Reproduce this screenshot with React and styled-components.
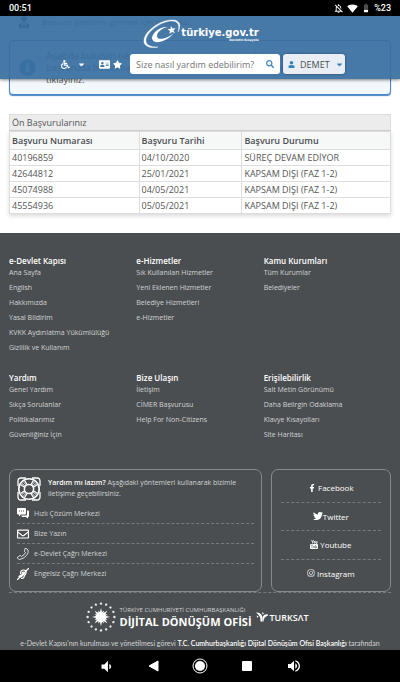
import { useState } from "react";
import styled, { createGlobalStyle, css } from "styled-components";
import {
  FaAddressCard,
  FaCaretDown,
  FaFacebookF,
  FaInfoCircle,
  FaInstagram,
  FaRegEnvelope,
  FaSearch,
  FaStar,
  FaTwitter,
  FaUser,
  FaUserTie,
  FaWheelchair,
} from "react-icons/fa";
import {
  MdBattery20,
  MdOutlineNotificationsOff,
  MdSignalWifi4Bar,
  MdVolumeDown,
  MdVolumeUp,
} from "react-icons/md";

const applications = [
  { id: "40196859", date: "04/10/2020", status: "SÜREÇ DEVAM EDİYOR" },
  { id: "42644812", date: "25/01/2021", status: "KAPSAM DIŞI (FAZ 1-2)" },
  { id: "45074988", date: "04/05/2021", status: "KAPSAM DIŞI (FAZ 1-2)" },
  { id: "45554936", date: "05/05/2021", status: "KAPSAM DIŞI (FAZ 1-2)" },
];

const linkGroups = [
  {
    title: "e-Devlet Kapısı",
    links: [
      "Ana Sayfa",
      "English",
      "Hakkımızda",
      "Yasal Bildirim",
      "KVKK Aydınlatma Yükümlülüğü",
      "Gizlilik ve Kullanım",
    ],
  },
  {
    title: "e-Hizmetler",
    links: [
      "Sık Kullanılan Hizmetler",
      "Yeni Eklenen Hizmetler",
      "Belediye Hizmetleri",
      "e-Hizmetler",
    ],
  },
  { title: "Kamu Kurumları", links: ["Tüm Kurumlar", "Belediyeler"] },
  {
    title: "Yardım",
    links: [
      "Genel Yardım",
      "Sıkça Sorulanlar",
      "Politikalarımız",
      "Güvenliğiniz İçin",
    ],
  },
  {
    title: "Bize Ulaşın",
    links: ["İletişim", "CİMER Başvurusu", "Help For Non-Citizens"],
  },
  {
    title: "Erişilebilirlik",
    links: [
      "Salt Metin Görünümü",
      "Daha Belirgin Odaklama",
      "Klavye Kısayolları",
      "Site Haritası",
    ],
  },
];

const SwooshLogo = () => (
  <svg width="38" height="30" viewBox="0 0 38 30" aria-hidden="true">
    <path
      d="M35 13C39 5 36 1 29 1C17 1 2 12 1 21C0 27 7 30 15 28C7 28 2 26 3 20C5 12 18 2 29 2C35 2 37 6 35 13Z"
      fill="#fff"
      stroke="#fff"
      strokeWidth="0.400"
    />
    <path
      d="M25 8C17 7 9 14 9 19C9 26 23 24 31 14C24 20 14 22 14 17C14 13 19 9 25 8Z"
      fill="#fff"
    />
    <path
      d="M28 7L29.500 9.500L32.500 9L30.500 11.500L32 14L29 13L26.500 15L27 12L24.500 10L27.500 10Z"
      fill="#fff"
    />
  </svg>
);

const LifeRing = () => (
  <svg
    width="24"
    height="24"
    viewBox="0 0 24 24"
    fill="none"
    stroke="#fff"
    aria-hidden="true"
  >
    <circle cx="12" cy="12" r="10.200" strokeWidth="1.600" />
    <circle cx="12" cy="12" r="4.600" strokeWidth="1.500" />
    {[0, 90, 180, 270].map((angle) => (
      <g key={angle} transform={`rotate(${angle} 12 12)`}>
        <path d="M3.500 7.500L8 10.500M7.500 3.500L10.500 8" strokeWidth="1.300" />
        <path d="M5 6.500L8.500 9.500M6.500 5L9.500 8.500" strokeWidth="0.800" />
        <path d="M1 9V4Q1 1 4 1H9" strokeWidth="1.300" />
      </g>
    ))}
  </svg>
);

const ChatIcon = () => (
  <svg width="12" height="12" viewBox="0 0 24 24" aria-hidden="true">
    <path
      d="M2 2H16Q18 2 18 4V13Q18 15 16 15H8L4 19V15H2Q0 15 0 13V4Q0 2 2 2Z"
      fill="#fff"
    />
    <path
      d="M20 7H22Q24 7 24 9V18Q24 20 22 20V23L18 20H11Q9 20 9 17H18Q20 17 20 14Z"
      fill="#fff"
    />
    <path d="M4 8H6M8 8H10M12 8H14" stroke="#4b4e50" strokeWidth="2" />
  </svg>
);

const PhoneIcon = () => (
  <svg
    width="12"
    height="12"
    viewBox="0 0 24 24"
    fill="none"
    stroke="#dfe2e3"
    strokeWidth="2"
    strokeLinejoin="round"
    aria-hidden="true"
  >
    <path d="M16 1Q18 0 20 2L22 4Q24 9 19 15Q13 22 5 23Q3 23 1 20Q0 18 3 17L6 15Q8 15 9 17Q15 14 17 9Q14 8 15 5Z" />
  </svg>
);

const EarIcon = () => (
  <svg
    width="12"
    height="12"
    viewBox="0 0 24 24"
    fill="none"
    stroke="#fff"
    strokeWidth="2.400"
    strokeLinecap="round"
    aria-hidden="true"
  >
    <path d="M7 11Q7 4 13 4Q20 4 18 10Q17 13 15 15Q14 21 9 21" />
    <path d="M10 12Q10 8 13 8Q15 9 14 12" />
    <path d="M1 23L23 1M4 17L8 14M8 18L14 12" />
  </svg>
);

const YoutubeIcon = () => (
  <svg width="8" height="9" viewBox="0 0 16 18" aria-hidden="true">
    <path
      d="M3 0L5 4V7M7 0L5 4M8 3V6H10V3H8M12 2V7H14V2"
      fill="none"
      stroke="#fff"
      strokeWidth="1.500"
    />
    <rect x="0" y="8" width="16" height="10" rx="2" fill="#fff" />
    <path
      d="M2 10H6M4 10V16M7 12V15H9V12M11 10V16H13V12"
      fill="none"
      stroke="#4b4e50"
    />
  </svg>
);

const PresidencyEmblem = () => (
  <svg width="30" height="30" viewBox="0 0 30 30" aria-hidden="true">
    {Array.from({ length: 16 }, (_, i) => (
      <circle
        key={i}
        cx="15"
        cy="1.600"
        r="1.200"
        fill="#e8eaea"
        transform={`rotate(${i * 22.5} 15 15)`}
      />
    ))}
    {Array.from({ length: 16 }, (_, i) => (
      <path
        key={i}
        d={i % 2 ? "M13.500 12L15 8L16.500 12Z" : "M13.500 12L15 6L16.500 12Z"}
        fill="#fff"
        transform={`rotate(${i * 22.5} 15 15)`}
      />
    ))}
    <circle cx="15" cy="15" r="5" fill="#fff" />
  </svg>
);

const TurksatMark = () => (
  <svg width="12" height="10" viewBox="0 0 24 20" fill="#fff" aria-hidden="true">
    <path d="M0 1Q9 0 12 8Q13 12 13 19H9Q10 8 0 1Z" />
    <path d="M24 5Q16 3 13 10V19H15Q15 10 24 7Z" />
    <path d="M1 7L5 9L3 12ZM12 0L16 3L13 5Z" />
  </svg>
);

const contacts = [
  { label: "Hızlı Çözüm Merkezi", icon: <ChatIcon /> },
  { label: "Bize Yazın", icon: <FaRegEnvelope /> },
  { label: "e-Devlet Çağrı Merkezi", icon: <PhoneIcon /> },
  { label: "Engelsiz Çağrı Merkezi", icon: <EarIcon /> },
];

const socials = [
  { label: "Facebook", icon: <FaFacebookF /> },
  { label: "Twitter", icon: <FaTwitter size={10} />, tight: true },
  { label: "Youtube", icon: <YoutubeIcon /> },
  { label: "Instagram", icon: <FaInstagram /> },
];

const SiteHeader = () => {
  const [query, setQuery] = useState("");

  return (
    <StyledHeader>
      <Brand href="#">
        <SwooshLogo />
        <BrandName>
          türkiye.gov.tr
          <small>Devletin Kısayolu</small>
        </BrandName>
      </Brand>
      <Toolbar>
        <IconButton aria-label="Erişilebilirlik" $wide>
          <FaWheelchair />
          <FaCaretDown />
        </IconButton>
        <IconButton aria-label="Kimlik">
          <FaAddressCard size={11} />
        </IconButton>
        <IconButton aria-label="Favoriler">
          <FaStar />
        </IconButton>
        <SearchBox onSubmit={(e) => e.preventDefault()}>
          <input
            type="text"
            aria-label="Arama"
            placeholder="Size nasıl yardım edebilirim?"
            value={query}
            onChange={(e) => setQuery(e.target.value)}
          />
          <button aria-label="Ara">
            <FaSearch />
          </button>
        </SearchBox>
        <UserButton>
          <FaUser size={7} />
          <span>DEMET</span>
          <FaCaretDown size={9} />
        </UserButton>
      </Toolbar>
    </StyledHeader>
  );
};

const App = () => (
  <Screen>
    <GlobalStyle />
    <StatusBar>
      <time>00:51</time>
      <div>
        <MdOutlineNotificationsOff size={11} />
        <MdSignalWifi4Bar size={11} />
        <MdBattery20 size={10} />
        <span>%23</span>
      </div>
    </StatusBar>

    <Browser>
      <SiteHeader />
      <Content>
        <Condition>
          <FaUserTie size={12} />
          <span>Başvuru şartlarını görmek için tıklayınız.</span>
        </Condition>
        <Notice>
          <FaInfoCircle size={17} />
          <p>
            Aşağıda bulunan tablodan ön başvurularınızı görebilirsiniz. Yeni
            <br />
            başvuruda bulunmak için Yeni Başvuru bağlantısı üzerine
            <br />
            tıklayınız.
          </p>
        </Notice>
        <Applications>
          <caption>Ön Başvurularınız</caption>
          <thead>
            <tr>
              <th>Başvuru Numarası</th>
              <th>Başvuru Tarihi</th>
              <th>Başvuru Durumu</th>
            </tr>
          </thead>
          <tbody>
            {applications.map((item) => (
              <tr key={item.id}>
                <td>{item.id}</td>
                <td>{item.date}</td>
                <td>{item.status}</td>
              </tr>
            ))}
          </tbody>
        </Applications>
      </Content>

      <Footer>
        <LinkGrid>
          {linkGroups.map((group) => (
            <section key={group.title}>
              <h2>{group.title}</h2>
              <ul>
                {group.links.map((link) => (
                  <li key={link}>
                    <a href="#">{link}</a>
                  </li>
                ))}
              </ul>
            </section>
          ))}
        </LinkGrid>

        <Panels>
          <HelpPanel>
            <HelpIntro>
              <LifeRing />
              <p>
                <b>Yardım mı lazım?</b> Aşağıdaki yöntemleri kullanarak bizimle
                iletişime geçebilirsiniz.
              </p>
            </HelpIntro>
            {contacts.map((item) => (
              <ContactLink href="#" key={item.label}>
                {item.icon}
                {item.label}
              </ContactLink>
            ))}
          </HelpPanel>
          <SocialPanel>
            {socials.map((item) => (
              <SocialLink href="#" key={item.label} $tight={item.tight}>
                {item.icon}
                {item.label}
              </SocialLink>
            ))}
          </SocialPanel>
        </Panels>

        <Partners>
          <PresidencyEmblem />
          <Office>
            <span>TÜRKİYE CUMHURİYETİ CUMHURBAŞKANLIĞI</span>
            <strong>DİJİTAL DÖNÜŞÜM OFİSİ</strong>
          </Office>
          <Turksat>
            <TurksatMark />
            <span>TURKSΛT</span>
          </Turksat>
        </Partners>
        <Legal>
          e-Devlet Kapısı'nın kurulması ve yönetilmesi görevi{" "}
          <b>T.C. Cumhurbaşkanlığı Dijital Dönüşüm Ofisi Başkanlığı</b>{" "}
          tarafından
        </Legal>
      </Footer>
    </Browser>

    <NavBar>
      <button aria-label="Sesi kıs">
        <MdVolumeDown size={17} />
      </button>
      <button aria-label="Geri">
        <svg width="11" height="12" viewBox="0 0 11 12">
          <path d="M10 1V11L1 6Z" fill="#fff" stroke="#fff" />
        </svg>
      </button>
      <button aria-label="Ana ekran">
        <svg width="16" height="16" viewBox="0 0 16 16">
          <circle cx="8" cy="8" r="7" fill="none" stroke="#fff" />
          <circle cx="8" cy="8" r="5" fill="#fff" />
        </svg>
      </button>
      <button aria-label="Son uygulamalar">
        <svg width="12" height="12" viewBox="0 0 12 12">
          <rect x="1" y="1" width="10" height="10" rx="1" fill="#fff" />
        </svg>
      </button>
      <button aria-label="Sesi aç">
        <MdVolumeUp size={16} />
      </button>
    </NavBar>
  </Screen>
);

export default App;

const GlobalStyle = createGlobalStyle`
  * {
    box-sizing: border-box;
  }
  body {
    margin: 0;
    background: #000;
    font-family: "Open Sans", "Noto Sans", sans-serif;
  }
  h2, p, ul {
    margin: 0;
    padding: 0;
  }
  ul {
    list-style: none;
  }
  a {
    color: inherit;
    text-decoration: none;
  }
  button {
    padding: 0;
    border: 0;
    background: none;
    color: inherit;
    font: inherit;
    cursor: pointer;
  }
  svg {
    flex: none;
  }
`;

const Screen = styled.div`
  display: flex;
  flex-direction: column;
  height: 100vh;
`;

const StatusBar = styled.div`
  display: flex;
  flex: none;
  align-items: center;
  justify-content: space-between;
  height: 16px;
  padding: 0 9px;
  background: #000;
  color: #fff;
  font: 500 9px Roboto, sans-serif;
  > div {
    display: flex;
    align-items: center;
    gap: 3px;
  }
`;

const Browser = styled.main`
  position: relative;
  display: flex;
  flex: 1;
  flex-direction: column;
  overflow: hidden;
  background: #fff;
`;

const StyledHeader = styled.header`
  position: absolute;
  z-index: 2;
  inset: 0 0 auto;
  display: flex;
  flex-direction: column;
  align-items: center;
  height: 63px;
  padding-top: 3px;
  background: rgba(55, 110, 160, 0.92);
  box-shadow: 0 1px 3px rgba(0, 0, 0, 0.5);
  color: #fff;
`;

const Brand = styled.a`
  display: flex;
  align-items: center;
  height: 30px;
  padding-left: 2px;
`;

const BrandName = styled.span`
  display: flex;
  flex-direction: column;
  align-items: flex-end;
  font: bold 10px "DejaVu Sans", sans-serif;
  line-height: 12px;
  small {
    font-size: 3px;
    line-height: 3px;
  }
`;

const Toolbar = styled.div`
  display: flex;
  align-items: center;
  align-self: stretch;
  justify-content: flex-end;
  gap: 3px;
  margin-top: 5px;
  padding: 0 55px 0 61px;
`;

const IconButton = styled.button`
  display: flex;
  align-items: center;
  gap: 7px;
  font-size: 9px;
  ${({ $wide }) =>
    $wide &&
    css`
      margin-right: 10px;
    `}
`;

const SearchBox = styled.form`
  display: flex;
  flex: 1;
  align-items: center;
  height: 20px;
  margin-left: 5px;
  padding: 0 6px;
  border-radius: 3px;
  background: #fff;
  input {
    flex: 1;
    min-width: 0;
    padding: 0;
    border: 0;
    outline: 0;
    color: #555;
    font: 9px "Open Sans", sans-serif;
    &::placeholder {
      color: #757575;
    }
  }
  button {
    display: flex;
    color: #3b83bd;
    font-size: 8px;
  }
`;

const UserButton = styled.button`
  display: flex;
  align-items: center;
  gap: 5px;
  width: 62px;
  height: 20px;
  padding: 0 5px;
  border-radius: 3px;
  background: #e9eef5;
  box-shadow: 0 0 2px rgba(0, 0, 0, 0.5);
  color: #3b83bd;
  font-size: 9px;
  text-align: left;
  span {
    flex: 1;
    color: #4b4e50;
  }
`;

const Content = styled.div`
  flex: none;
  padding: 0 9px 19px;
  color: #555;
  font-size: 9px;
`;

const Condition = styled.div`
  display: flex;
  align-items: flex-start;
  gap: 12px;
  height: 16px;
  padding: 0 8px;
  border: 1px solid #ddd;
  border-top: 0;
  font-size: 8px;
  line-height: 11px;
`;

const Notice = styled.div`
  display: flex;
  align-items: center;
  gap: 10px;
  height: 55px;
  margin: 8px 0 19px;
  padding: 0 10px 0 9px;
  border: 1px solid #4a87c7;
  border-radius: 4px;
  background: #f3f8fc;
  box-shadow: 0 1px 1px #4a87c7;
  > svg {
    color: #4a87c7;
  }
  p {
    line-height: 12px;
  }
`;

const Applications = styled.table`
  width: 100%;
  border-collapse: collapse;
  table-layout: fixed;
  box-shadow: 0 2px 4px rgba(0, 0, 0, 0.15);
  line-height: 15px;
  text-align: left;
  caption {
    height: 17px;
    padding: 0 2px;
    border: 1px solid #ddd;
    border-bottom-color: #ccc;
    background: #ececec;
    text-align: left;
  }
  th,
  td {
    height: 16px;
    padding: 0 2px;
    border: 1px solid #ddd;
  }
  th {
    height: 18px;
    background: #f6f8f8;
    color: #4b4e50;
    font-weight: 600;
    &:first-child {
      width: 34%;
    }
    &:nth-child(2) {
      width: 27%;
    }
  }
`;

const Footer = styled.footer`
  flex: 1 0 auto;
  padding: 21px 9px 0;
  background: #4b4e50;
  color: #d0d3d5;
  font-size: 8px;
  b {
    color: #fff;
    font-weight: 600;
  }
`;

const LinkGrid = styled.nav`
  display: grid;
  grid-template-columns: repeat(3, 1fr);
  row-gap: 14px;
  h2 {
    color: #fff;
    font-size: 8px;
    font-weight: 600;
    line-height: 13px;
  }
  li {
    height: 15px;
    font-size: 7px;
    line-height: 12px;
  }
`;

const Panels = styled.div`
  display: grid;
  grid-template-columns: minmax(0, 21fr) minmax(0, 10fr);
  gap: 9px;
  margin-top: 25px;
  border-bottom: 1px dashed #777b7d;
`;

const panel = css`
  display: flex;
  flex-direction: column;
  height: 123px;
  border: 1px solid #858a8c;
  border-radius: 7px;
`;

const HelpPanel = styled.section`
  ${panel}
  padding: 7px;
`;

const HelpIntro = styled.div`
  display: flex;
  gap: 7px;
  margin-bottom: 2px;
  font-size: 7px;
  line-height: 11px;
  p {
    flex: 1;
    max-width: 196px;
  }
`;

const ContactLink = styled.a`
  display: flex;
  align-items: center;
  gap: 5px;
  height: 20px;
  font-size: 7px;
  > svg {
    width: 12px;
    height: 12px;
    color: #fff;
  }
  & + & {
    border-top: 1px dashed #777b7d;
  }
`;

const SocialPanel = styled.section`
  ${panel}
  padding: 4px 9px;
`;

const SocialLink = styled.a`
  display: flex;
  flex: 1;
  align-items: center;
  justify-content: center;
  gap: ${({ $tight }) => ($tight ? 0 : 2)}px;
  color: #fff;
  font-size: 8px;
  & + & {
    border-top: 1px dashed #777b7d;
  }
`;

const Partners = styled.div`
  display: flex;
  align-items: center;
  justify-content: center;
  gap: 4px;
  margin-top: 9px;
  padding-right: 6px;
  color: #fff;
`;

const Office = styled.div`
  display: flex;
  flex-direction: column;
  span {
    color: #d0d3d5;
    font-size: 6px;
    line-height: 9px;
  }
  strong {
    font-size: 11px;
    line-height: 13px;
  }
`;

const Turksat = styled.div`
  display: flex;
  align-items: center;
  gap: 2px;
  font-size: 9px;
  font-weight: 600;
`;

const Legal = styled.p`
  margin-top: 5px;
  font-family: Lato, "Open Sans", sans-serif;
  font-size: 7px;
  line-height: 12px;
  text-align: center;
  white-space: nowrap;
`;

const NavBar = styled.nav`
  display: flex;
  flex: none;
  align-items: center;
  justify-content: center;
  height: 32px;
  background: #000;
  color: #fff;
  button {
    display: flex;
    align-items: center;
    justify-content: center;
    width: 47px;
    height: 32px;
  }
`;
